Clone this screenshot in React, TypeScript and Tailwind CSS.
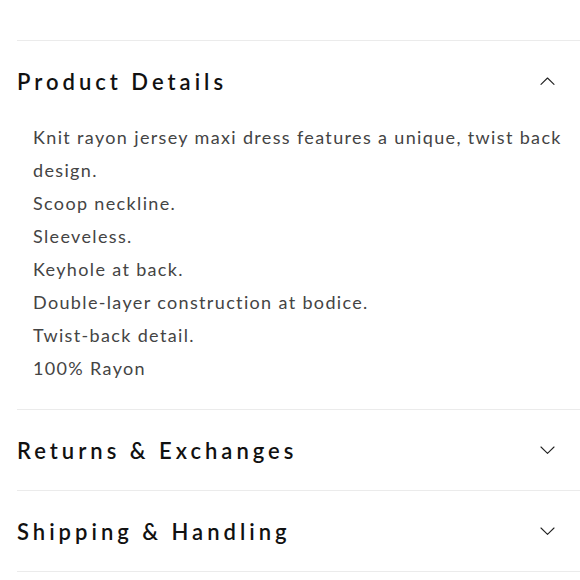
import { useState } from "react";

type Section = { key: string; title: string; lines: string[] };

const SECTIONS: Section[] = [
  {
    key: "details",
    title: "Product Details",
    lines: [
      "Knit rayon jersey maxi dress features a unique, twist back design.",
      "Scoop neckline.",
      "Sleeveless.",
      "Keyhole at back.",
      "Double-layer construction at bodice.",
      "Twist-back detail.",
      "100% Rayon",
    ],
  },
  { key: "returns", title: "Returns & Exchanges", lines: [] },
  { key: "shipping", title: "Shipping & Handling", lines: [] },
];

function Chevron({ up }: { up: boolean }) {
  return (
    <svg width="15" height="8" viewBox="0 0 15 8" fill="none" className="shrink-0">
      <path
        d={up ? "M1 7.3L7.5 1L14 7.3" : "M1 1L7.5 7.3L14 1"}
        stroke="#222"
        strokeWidth="1.1"
        strokeLinecap="round"
        strokeLinejoin="round"
      />
    </svg>
  );
}

export default function App() {
  const [open, setOpen] = useState<string | null>("details");

  return (
    <div className="min-h-[580px] bg-white pt-[40px] pl-[17px]" style={{ fontFamily: "Lato, 'Open Sans', sans-serif" }}>
      {SECTIONS.map((s) => {
        const isOpen = open === s.key;
        return (
          <div key={s.key} className="border-t border-[#ebebeb]">
            <button
              onClick={() => setOpen(isOpen ? null : s.key)}
              className="flex h-[80px] w-full items-center justify-between pr-[25px] text-left"
            >
              <span className="text-[22px] font-semibold tracking-[4px] text-[#111]">{s.title}</span>
              <Chevron up={isOpen} />
            </button>
            {isOpen && (
              <div className="pb-[24px] pl-[16px] pr-[8px] text-[18px] leading-[33px] tracking-[1.35px] text-[#444]">
                {s.lines.map((l) => (
                  <p key={l}>{l}</p>
                ))}
              </div>
            )}
          </div>
        );
      })}
      <div className="border-t border-[#ebebeb]" />
    </div>
  );
}
